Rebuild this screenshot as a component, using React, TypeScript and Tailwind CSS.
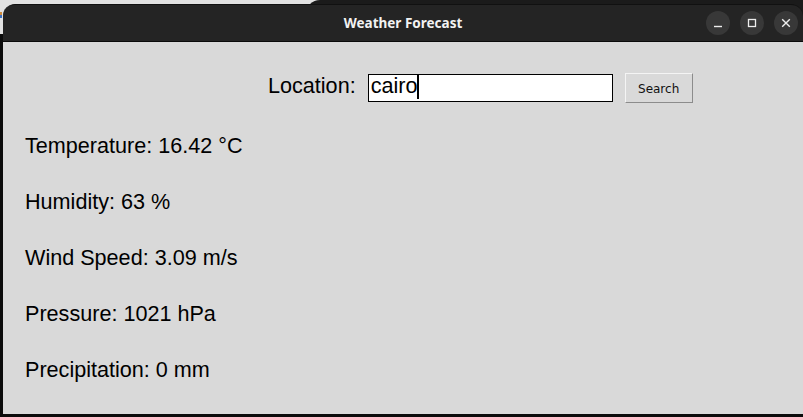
import React from "react";

const labels = [
  "Temperature: 16.42 °C",
  "Humidity: 63 %",
  "Wind Speed: 3.09 m/s",
  "Pressure: 1021 hPa",
  "Precipitation: 0 mm",
];

export default function App() {
  return (
    <div className="relative w-[803px] h-[417px] overflow-hidden bg-[#0b0b0b]">
      {/* desktop behind */}
      <div className="absolute left-0 top-0 w-[320px] h-[34px] bg-[#e2e2e2]" />
      <div className="absolute left-0 top-[12px] w-[2px] h-[3px] bg-[#d08a3a]" />
      <div className="absolute left-0 top-[15px] w-[2px] h-[3px] bg-[#3a6fc0]" />
      <div className="absolute left-[306px] top-0 w-[520px] h-[30px] rounded-tl-[14px] bg-[#1b1b1b]" />

      {/* window */}
      <div className="absolute left-[3px] top-[4px] w-[800px] h-[410px] flex flex-col">
        <div className="relative h-[37px] shrink-0 rounded-t-[12px] bg-[#242424] border-t border-[#111] flex items-center justify-end pr-[5px] gap-[10px]">
          <div
            className="absolute inset-x-0 top-0 h-full flex items-center justify-center text-[13.5px] font-bold text-[#f2f2f2]"
            style={{ fontFamily: '"Noto Sans", "DejaVu Sans", sans-serif' }}
          >
            Weather Forecast
          </div>
          <div className="relative w-[24px] h-[24px] rounded-full bg-[#383838] flex items-center justify-center">
            <svg width="10" height="10" viewBox="0 0 10 10">
              <path d="M1 8.5 H9" stroke="#eeeeee" strokeWidth="1.4" />
            </svg>
          </div>
          <div className="relative w-[24px] h-[24px] rounded-full bg-[#383838] flex items-center justify-center">
            <svg width="10" height="10" viewBox="0 0 10 10">
              <rect x="1.5" y="1.5" width="7" height="7" fill="none" stroke="#eeeeee" strokeWidth="1.3" />
            </svg>
          </div>
          <div className="relative w-[24px] h-[24px] rounded-full bg-[#383838] flex items-center justify-center">
            <svg width="10" height="10" viewBox="0 0 10 10">
              <path d="M1.2 1.2 L8.8 8.8 M8.8 1.2 L1.2 8.8" stroke="#eeeeee" strokeWidth="1.4" />
            </svg>
          </div>
        </div>
        <div className="h-[1px] bg-[#0a0a0a] shrink-0" />
        <div
          className="flex-1 bg-[#d9d9d9] flex flex-col text-black"
          style={{ fontFamily: '"Liberation Sans", Arial, sans-serif' }}
        >
          <div className="flex items-center h-[30px] mt-[31px] pl-[265px]">
            <span className="text-[21.6px] leading-[24px] mb-[5px]">Location:</span>
            <div className="ml-[12px] w-[245px] h-[28px] border border-black bg-white flex items-start pl-[2px]">
              <span className="text-[21.6px] leading-[21px]">cairo</span>
              <span className="w-[2px] h-[24px] bg-black" />
            </div>
            <div
              className="ml-[12px] w-[68px] h-[30px] pt-[2px] bg-[#d9d9d9] border-t border-l border-[#f4f4f4] border-r border-b border-r-[#8c8c8c] border-b-[#8c8c8c] flex items-center justify-center text-[12px] text-[#111]"
              style={{ fontFamily: '"DejaVu Sans", sans-serif' }}
            >
              Search
            </div>
          </div>
          <div className="flex flex-col gap-[32px] mt-[31px] pl-[22px]">
            {labels.map((l) => (
              <div key={l} className="text-[21.6px] leading-[24px] h-[24px]">
                {l}
              </div>
            ))}
          </div>
        </div>
      </div>
    </div>
  );
}
